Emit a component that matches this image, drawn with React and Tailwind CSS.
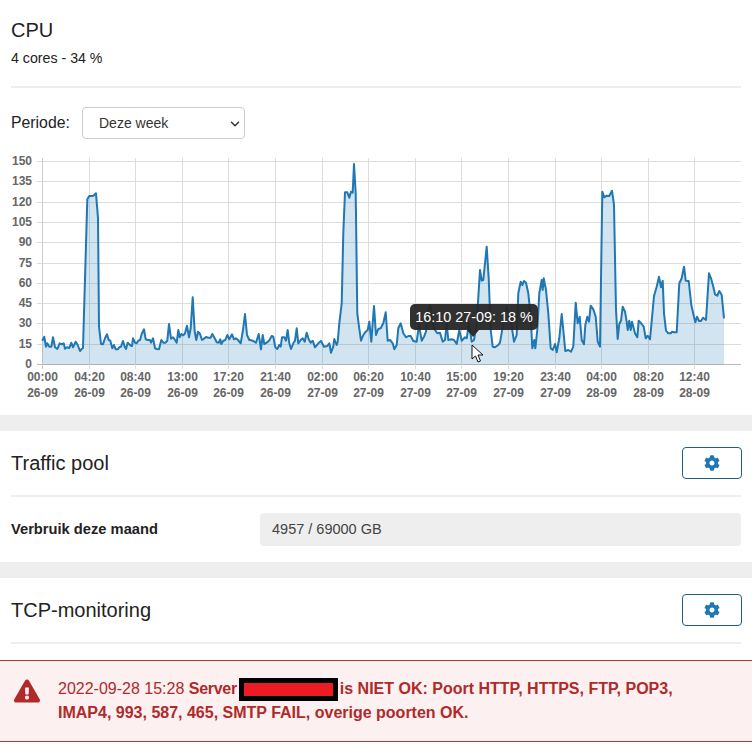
import React from 'react';
import { FaCog, FaExclamationTriangle } from 'react-icons/fa';
import { ChevronDown } from 'lucide-react';

// traced from the chart: [x, y] at 3x, per segment of the plot
const seg1 = [[127,572],[133,560],[138,590],[142,580],[148,590],[154,590],[159,562],[165,592],[172,597],[179,580],[186,583],[191,580],[195,596],[201,592],[208,594],[214,578],[219,592],[227,575],[233,585],[240,603],[246,596],[249,594],[262,148],[268,138],[274,138],[280,137],[288,130],[294,205],[297,530],[303,582],[309,583],[315,565],[321,553],[326,570],[331,572],[337,595],[342,585],[347,598],[353,598],[358,592],[363,590],[369,573],[374,590],[378,597],[383,578],[390,585],[396,588],[399,565],[405,578],[410,580],[415,572],[420,570],[426,550],[432,538],[437,568],[443,570],[450,570],[453,578],[459,565],[465,595],[471,597],[477,598],[484,570],[490,578],[496,578],[502,572],[507,522],[513,566],[519,562],[525,570],[530,578],[535,540],[539,562],[544,552],[550,556],[555,550],[561,527],[567,562],[572,535],[578,442],[584,545],[589,570],[594,545],[600,552],[606,570],[612,566],[618,561],[625,563],[632,563],[637,552],[644,565],[650,577],[656,578],[661,568],[664,582],[670,572],[676,570],[682,555],[688,568],[696,553],[702,568],[708,565],[714,570],[722,580],[729,540],[735,492],[741,555],[748,570]];
const seg2 = [[0,570],[8,572],[18,578],[26,552],[33,598],[38,555],[43,582],[50,578],[57,572],[65,558],[70,560],[76,592],[82,597],[88,585],[92,590],[96,562],[103,562],[108,572],[113,540],[118,580],[123,597],[130,580],[135,572],[140,535],[145,580],[152,570],[158,565],[164,575],[170,548],[176,568],[182,578],[188,572],[195,592],[205,580],[213,573],[222,590],[232,588],[238,580],[243,608],[250,590],[253,567],[260,585],[263,575],[268,520],[275,460],[280,250],[285,127],[292,127],[298,143],[303,125],[308,128],[312,42],[317,130],[322,490],[327,530],[333,572],[340,555],[347,545],[353,540],[358,515],[364,575],[372,468],[378,555],[385,537],[392,535],[400,520],[407,487],[413,572],[420,570],[428,580],[433,598],[440,585],[445,535],[452,520],[460,550],[468,562],[475,558],[482,558],[490,573],[500,575],[507,525],[515,572],[522,560],[528,545],[535,475],[541,465],[548,520],[555,540],[562,550],[570,548],[578,575],[585,570],[590,520],[595,570],[605,568],[612,570],[620,582],[628,540],[635,572],[645,562],[650,565],[657,520],[665,575],[672,570],[680,520],[690,360],[695,392],[700,390],[710,290],[716,385],[722,540],[728,590],[735,592],[745,585]];
const seg3 = [[0,578],[8,530],[20,470],[32,510],[42,575],[50,555],[55,430],[62,395],[67,405],[72,393],[78,398],[85,430],[92,500],[97,595],[103,570],[106,595],[112,540],[118,430],[125,390],[128,420],[131,385],[138,420],[145,490],[152,595],[158,600],[165,582],[170,607],[178,565],[185,492],[190,540],[196,603],[205,600],[213,605],[220,590],[227,458],[233,520],[239,500],[245,570],[252,583],[256,525],[262,500],[267,515],[272,467],[280,478],[287,500],[293,575],[300,590],[307,125],[313,142],[320,137],[328,138],[336,122],[342,165],[348,480],[353,567],[358,522],[363,512],[368,470],[375,485],[380,515],[383,540],[388,512],[392,540],[396,515],[405,550],[412,562],[416,512],[425,522],[431,530],[437,565],[443,557],[450,568],[462,438],[470,410],[477,380],[483,412],[488,392],[492,490],[498,542],[505,550],[512,550],[516,545],[522,547],[530,547],[538,400],[545,385],[552,350],[557,392],[566,393],[574,465],[582,500],[586,517],[591,500],[597,513],[603,513],[609,503],[618,510],[627,370],[633,385],[640,410],[645,433],[652,437],[658,423],[665,435],[672,505]];

const toPage = (pts, offset) => pts.map(([x, y]) => [offset + x / 3, y / 3]);
const points = [...toPage(seg1, 0), ...toPage(seg2, 250), ...toPage(seg3, 500)];
const linePath = points.map(([x, y]) => `${x.toFixed(1)},${y.toFixed(1)}`).join(' ');
const areaPath = `42.5,214.5 ${linePath} 724,214.5`;

const yTicks = [150, 135, 120, 105, 90, 75, 60, 45, 30, 15, 0];
const xTicks = [
  ['00:00', '26-09'], ['04:20', '26-09'], ['08:40', '26-09'], ['13:00', '26-09'], ['17:20', '26-09'],
  ['21:40', '26-09'], ['02:00', '27-09'], ['06:20', '27-09'], ['10:40', '27-09'], ['15:00', '27-09'],
  ['19:20', '27-09'], ['23:40', '27-09'], ['04:00', '28-09'], ['08:20', '28-09'], ['12:40', '28-09'],
];

function CpuChart() {
  return (
    <svg width="752" height="265" viewBox="0 0 752 265" className="block -mx-[11px]">
      {yTicks.map((t) => {
        const y = Math.round(214 - (t * 203) / 150) + 0.5;
        return (
          <g key={t}>
            <line x1="37" x2="741" y1={y} y2={y} stroke={t === 0 ? '#bbb' : '#ddd'} />
            <text x="32" y={y + 3} textAnchor="end" fontSize="12" fontWeight="700" fill="#666">{t}</text>
          </g>
        );
      })}
      {xTicks.map(([time, date], i) => {
        const x = Math.round(42 + i * 46.6) + 0.5;
        return (
          <g key={i}>
            <line x1={x} x2={x} y1="8" y2="219" stroke={i === 0 ? '#ccc' : '#ddd'} />
            <text x={x} y="231" textAnchor="middle" fontSize="12" fontWeight="700" fill="#666">{time}</text>
            <text x={x} y="247" textAnchor="middle" fontSize="12" fontWeight="700" fill="#666">{date}</text>
          </g>
        );
      })}
      <polygon points={areaPath} fill="#1f77b4" fillOpacity="0.2" />
      <polyline points={linePath} fill="none" stroke="#1f77b4" strokeWidth="2" strokeLinejoin="round" />
    </svg>
  );
}

function SettingsButton() {
  return (
    <button className="w-[60px] h-8 -mr-px flex items-center justify-center rounded border border-[#1f5f85] bg-white text-[#1f77b4]">
      <FaCog size={16} />
    </button>
  );
}

function SectionHeader({ title }) {
  return (
    <>
      <div className="flex items-center justify-between h-8">
        <h2 className="text-[20px] text-[#222]">{title}</h2>
        <SettingsButton />
      </div>
      <div className="mt-4 h-[2px] bg-[#eee]" />
    </>
  );
}

export default function App() {
  return (
    <div className="relative w-[752px] h-[744px] overflow-hidden bg-white text-[#222] font-['Liberation_Sans',Arial,sans-serif]">
      <section className="px-[11px] pt-[18px]">
        <h2 className="text-[20px] leading-6">CPU</h2>
        <p className="mt-[6px] text-[14.2px] leading-5">4 cores - 34 %</p>
        <div className="mt-[18px] h-[2px] bg-[#eee]" />
        <div className="mt-[19px] flex items-center gap-[11px]">
          <label className="text-[15.8px] w-[60px]">Periode:</label>
          <div className="relative">
            <select className="appearance-none w-[163px] h-8 pl-4 rounded border border-[#ccc] bg-white text-[14px] text-[#333]">
              <option>Deze week</option>
            </select>
            <ChevronDown size={14} strokeWidth={2.5} className="absolute right-[3px] top-[10px] text-[#333] pointer-events-none" />
          </div>
        </div>
        <div className="mt-[11px]">
          <CpuChart />
        </div>
      </section>

      {/* tooltip + muispijl over de grafiek */}
      <div className="absolute left-[410px] top-[304px] h-[26px] w-[128px] rounded-[5px] bg-[#262626]/95 text-white text-[14.4px] leading-[26px] text-center">
        16:10 27-09: 18 %
        <div className="absolute left-[57px] top-[26px] w-0 h-0 border-x-[6px] border-x-transparent border-t-[7px] border-t-[#262626]/95" />
      </div>
      <svg className="absolute left-[471px] top-[344px]" width="13" height="19" viewBox="0 0 13 19">
        <path d="M1 1 L1 15 L4.5 12 L7 18 L9.5 17 L7 11 L12 11 Z" fill="#fff" stroke="#111" strokeWidth="1" />
      </svg>

      <div className="h-4 bg-[#eee]" />

      <section className="px-[11px] pt-4 pb-4">
        <SectionHeader title="Traffic pool" />
        <div className="mt-4 flex items-center">
          <div className="w-[249px] text-[14.7px] font-bold">Verbruik deze maand</div>
          <div className="flex-1 h-[33px] pl-3 rounded bg-[#eee] text-[14.5px] leading-[33px] text-[#444]">4957 / 69000 GB</div>
        </div>
      </section>

      <div className="h-4 bg-[#eee]" />

      <section className="px-[11px] pt-4 pb-4">
        <SectionHeader title="TCP-monitoring" />
      </section>

      <div className="flex gap-[18px] pl-[14px] pr-[60px] pt-4 pb-4 border-y border-[#a33a3a] bg-[#fcf0f1] text-[16px] leading-6 text-[#b02a2a]">
        <FaExclamationTriangle size={26} className="shrink-0 mt-[1px]" />
        <p>
          2022-09-28 15:28{' '}
          <b>
            <span className="tracking-[-0.3px]">Server</span>
            <span className="inline-block align-middle ml-[2px] mr-[2px] w-[99px] h-[23px] border-[5px] border-black bg-[#ed1c24]" />
            is NIET OK: Poort HTTP, HTTPS, FTP, POP3, IMAP4, 993, 587, 465, SMTP FAIL, overige poorten OK.
          </b>
        </p>
      </div>
    </div>
  );
}
